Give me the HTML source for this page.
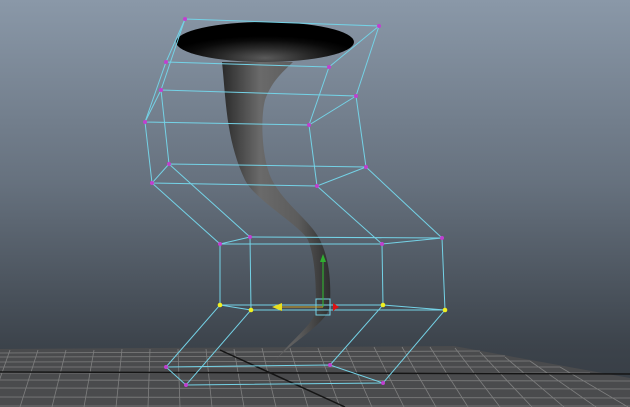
<!DOCTYPE html>
<html><head><style>
html,body{margin:0;padding:0;width:630px;height:407px;overflow:hidden;background:#55606c}
</style></head><body>
<svg width="630" height="407" viewBox="0 0 630 407" xmlns="http://www.w3.org/2000/svg">
<defs>
<linearGradient id="bg" x1="0" y1="0" x2="0" y2="1">
<stop offset="0" stop-color="#8a98a8"/>
<stop offset="0.45" stop-color="#66717e"/>
<stop offset="0.85" stop-color="#3c434b"/>
<stop offset="1" stop-color="#353b42"/>
</linearGradient>
<radialGradient id="disc" cx="0.5" cy="0.9" r="0.55">
<stop offset="0" stop-color="#5a5a5a"/>
<stop offset="0.45" stop-color="#2a2a2a"/>
<stop offset="0.8" stop-color="#0a0a0a"/>
<stop offset="1" stop-color="#000"/>
</radialGradient>
<linearGradient id="tube" x1="0" y1="0" x2="1" y2="0">
<stop offset="0" stop-color="#2a2a2a"/>
<stop offset="0.35" stop-color="#6a6a6a"/>
<stop offset="0.7" stop-color="#5c5c5c"/>
<stop offset="1" stop-color="#2e2e2e"/>
</linearGradient>
</defs>
<rect width="630" height="407" fill="url(#bg)"/>
<!-- floor -->
<polygon points="0,349 454,346 630,378 630,407 0,407" fill="#4a4b4d"/>
<g stroke="#8c8c8c" stroke-width="0.8" opacity="0.8">
<line x1="0" y1="353" x2="480" y2="351"/>
<line x1="0" y1="357" x2="505" y2="356"/>
<line x1="0" y1="362" x2="530" y2="361"/>
<line x1="0" y1="367" x2="560" y2="367"/>
<line x1="0" y1="373" x2="590" y2="373"/>
<line x1="0" y1="380" x2="630" y2="381"/>
<line x1="0" y1="388" x2="630" y2="389"/>
<line x1="0" y1="397" x2="630" y2="398"/>
<line x1="0" y1="406" x2="630" y2="406"/>
<line x1="10" y1="350" x2="-10" y2="407"/>
<line x1="38" y1="350" x2="20" y2="407"/>
<line x1="66" y1="350" x2="52" y2="407"/>
<line x1="94" y1="350" x2="84" y2="407"/>
<line x1="122" y1="349" x2="116" y2="407"/>
<line x1="150" y1="349" x2="148" y2="407"/>
<line x1="178" y1="349" x2="180" y2="407"/>
<line x1="206" y1="349" x2="212" y2="407"/>
<line x1="234" y1="349" x2="244" y2="407"/>
<line x1="262" y1="348" x2="276" y2="407"/>
<line x1="290" y1="348" x2="308" y2="407"/>
<line x1="318" y1="348" x2="340" y2="407"/>
<line x1="346" y1="348" x2="372" y2="407"/>
<line x1="374" y1="347" x2="404" y2="407"/>
<line x1="402" y1="347" x2="436" y2="407"/>
<line x1="430" y1="347" x2="468" y2="407"/>
<line x1="455" y1="348" x2="500" y2="407"/>
<line x1="480" y1="352" x2="532" y2="407"/>
<line x1="505" y1="357" x2="564" y2="407"/>
<line x1="530" y1="361" x2="596" y2="407"/>
<line x1="560" y1="367" x2="628" y2="407"/>
</g>
<line x1="0" y1="372" x2="630" y2="374" stroke="#151515" stroke-width="1.5"/>
<line x1="220" y1="350" x2="345" y2="407" stroke="#151515" stroke-width="1.5"/>
<!-- tornado -->
<path d="M222,62 C226,100 226,140 245,180 C255,200 300,225 308,240 C316,260 316,290 316,310 C314,325 290,340 272,365 C285,345 328,325 330,305 C331,285 330,260 320,240 C310,220 285,205 272,180 C262,160 260,120 265,100 C272,80 285,70 293,62 Z" fill="url(#tube)"/>
<ellipse cx="265" cy="42" rx="89" ry="20" fill="url(#disc)"/>
<!-- lattice -->
<g fill="none" stroke="#74d2e6" stroke-width="1">
<polygon points="185,19 379,26 329,67 166,62"/>
<polygon points="161,90 356,96 309,125 145,122"/>
<polygon points="169,164 366,167 317,186 152,183"/>
<polygon points="250,237 442,238 382,244 220,244"/>
<polygon points="220,305 383,305 445,310 251,310"/>
<polygon points="166,367 330,365 383,383 186,385"/>
<polyline points="185,19 161,90 169,164 250,237 251,310 186,385"/>
<polyline points="379,26 356,96 366,167 442,238 445,310 383,383"/>
<polyline points="329,67 309,125 317,186 382,244 383,305 330,365"/>
<polyline points="166,62 145,122 152,183 220,244 220,305 166,367"/>
<rect x="316" y="299" width="14" height="16"/>
</g>
<g fill="#c040d0">
<circle cx="185" cy="19" r="2"/><circle cx="379" cy="26" r="2"/><circle cx="329" cy="67" r="2"/><circle cx="166" cy="62" r="2"/>
<circle cx="161" cy="90" r="2"/><circle cx="356" cy="96" r="2"/><circle cx="309" cy="125" r="2"/><circle cx="145" cy="122" r="2"/>
<circle cx="169" cy="164" r="2"/><circle cx="366" cy="167" r="2"/><circle cx="317" cy="186" r="2"/><circle cx="152" cy="183" r="2"/>
<circle cx="250" cy="237" r="2"/><circle cx="442" cy="238" r="2"/><circle cx="382" cy="244" r="2"/><circle cx="220" cy="244" r="2"/>
<circle cx="166" cy="367" r="2"/><circle cx="330" cy="365" r="2"/><circle cx="383" cy="383" r="2"/><circle cx="186" cy="385" r="2"/>
</g>
<g fill="#f0f020">
<circle cx="220" cy="305" r="2.3"/><circle cx="383" cy="305" r="2.3"/><circle cx="445" cy="310" r="2.3"/><circle cx="251" cy="310" r="2.3"/>
</g>
<!-- manipulator -->
<line x1="323" y1="307" x2="323" y2="262" stroke="#30c030" stroke-width="1"/>
<polygon points="323,254 320,262 326,262" fill="#30b030"/>
<line x1="323" y1="307" x2="280" y2="307" stroke="#d0a020" stroke-width="1"/>
<polygon points="272,307 282,303 282,311" fill="#e8e020"/>
<polygon points="339,307 333,303 333,311" fill="#e01010"/>
</svg>
</body></html>
